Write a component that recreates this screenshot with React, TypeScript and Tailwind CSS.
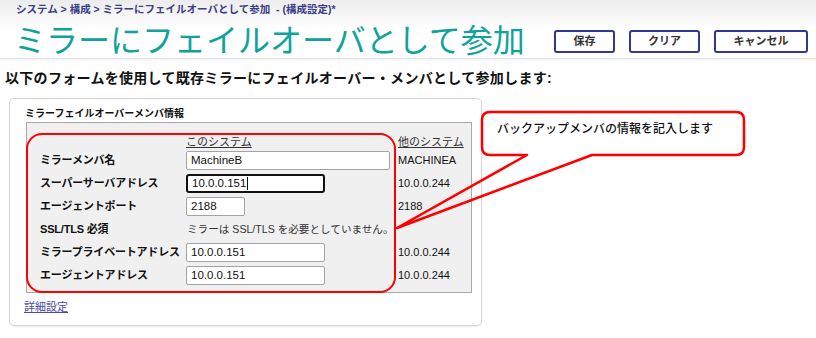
const rows = [
  { label: 'ミラーメンバ名', value: 'MachineB', width: 'w-[204px]', other: 'MACHINEA' },
  { label: 'スーパーサーバアドレス', value: '10.0.0.151', width: 'w-[139px]', other: '10.0.0.244', focused: true },
  { label: 'エージェントポート', value: '2188', width: 'w-[59px]', other: '2188' },
  { label: 'SSL/TLS 必須', text: 'ミラーは SSL/TLS を必要としていません。' },
  { label: 'ミラープライベートアドレス', value: '10.0.0.151', width: 'w-[139px]', other: '10.0.0.244' },
  { label: 'エージェントアドレス', value: '10.0.0.151', width: 'w-[139px]', other: '10.0.0.244' },
];

function Field({ value, width, focused }: { value: string; width?: string; focused?: boolean }) {
  return (
    <div
      className={`${width} flex h-[19px] items-center bg-white px-[4px] text-[11.5px] text-[#111] ${
        focused ? 'rounded-[3px] border-2 border-[#111]' : 'rounded-[2px] border border-[#a3a3a3]'
      }`}
    >
      {value}
      {focused && <span className="ml-[1px] h-[13px] w-[1px] bg-[#111]" />}
    </div>
  );
}

export default function App() {
  return (
    <div className="relative h-[338px] w-[816px] overflow-hidden bg-white font-['Liberation_Sans','Noto_Sans_CJK_JP',sans-serif] text-[#111]">
      {/* header */}
      <div className="h-[59px] border-b border-[#e2e2e2] bg-gradient-to-b from-[#ececec] via-white to-white shadow-[0_1px_2px_rgba(0,0,0,0.06)]">
        <div className="pl-[16px] pt-[3px] text-[10.5px] font-bold leading-[12px] text-[#3b3d86]">
          システム &gt; 構成 &gt; ミラーにフェイルオーバとして参加&nbsp;&nbsp;- (構成設定)*
        </div>
        <div className="mt-[6px] flex items-center justify-between pl-[14px] pr-[8px]">
          <h1 className="text-[32px] leading-[40px] text-[#0fa39b]">ミラーにフェイルオーバとして参加</h1>
          <div className="flex gap-[14px]">
            {[
              ['保存', 'w-[61px]'],
              ['クリア', 'w-[71px]'],
              ['キャンセル', 'w-[94px]'],
            ].map(([t, w]) => (
              <button
                key={t}
                className={`${w} flex h-[23px] items-center justify-center rounded-[3px] border-2 border-[#333695] bg-white text-[11px] font-bold text-[#333]`}
              >
                {t}
              </button>
            ))}
          </div>
        </div>
      </div>

      <div className="mt-[9px] pl-[5px] text-[14px] font-bold leading-[20px] tracking-[0.3px] text-[#111]">
        以下のフォームを使用して既存ミラーにフェイルオーバー・メンバとして参加します:
      </div>

      {/* panel */}
      <div className="ml-[9px] mt-[10px] h-[228px] w-[473px] rounded-[5px] border border-[#d6d6d6] shadow-[0_1px_2px_rgba(0,0,0,0.08)]">
        <div className="pl-[15px] pt-[9px] text-[10px] font-bold leading-[12px] text-[#111]">
          ミラーフェイルオーバーメンバ情報
        </div>
        <div className="ml-[16px] mt-[2px] h-[171px] w-[446px] border border-[#a9a9a9] bg-[#f0f0f0] pl-[13px] pt-[12px]">
          <div className="grid h-[14px] grid-cols-[146px_212px_auto] items-center text-[11px] leading-[14px] text-[#333]">
            <span />
            <span className="underline">このシステム</span>
            <span className="underline">他のシステム</span>
          </div>
          {rows.map((r) => (
            <div key={r.label} className="grid h-[23px] grid-cols-[146px_212px_auto] items-center text-[11px]">
              <span className="font-bold tracking-[-0.2px] text-[#111]">{r.label}</span>
              {r.text ? (
                <span className="col-span-2 pl-[1px] text-[10.6px] text-[#333]">{r.text}</span>
              ) : (
                <>
                  <Field value={r.value!} width={r.width} focused={r.focused} />
                  <span className="text-[#111]">{r.other}</span>
                </>
              )}
            </div>
          ))}
        </div>
        <a className="ml-[14px] mt-[7px] block text-[11px] leading-[14px] text-[#4b4ba8] underline">詳細設定</a>
      </div>

      {/* annotation */}
      <div className="absolute left-[26px] top-[133px] h-[160px] w-[370px] rounded-[16px] border-[2.5px] border-[#ff0000]" />
      <svg className="absolute left-0 top-0" width="816" height="338" viewBox="0 0 816 338" fill="none">
        <path
          d="M527 155 L490 155 Q482 155 482 147 L482 120 Q482 112 490 112 L736 112 Q744 112 744 120 L744 147 Q744 155 736 155 L592 155 L397 228 L527 155 Z"
          stroke="#ff0000"
          strokeWidth="2.5"
          strokeLinejoin="round"
        />
      </svg>
      <div className="absolute left-[497px] top-[121px] text-[12px] font-medium leading-[16px] text-[#111]">
        バックアップメンバの情報を記入します
      </div>
    </div>
  );
}
